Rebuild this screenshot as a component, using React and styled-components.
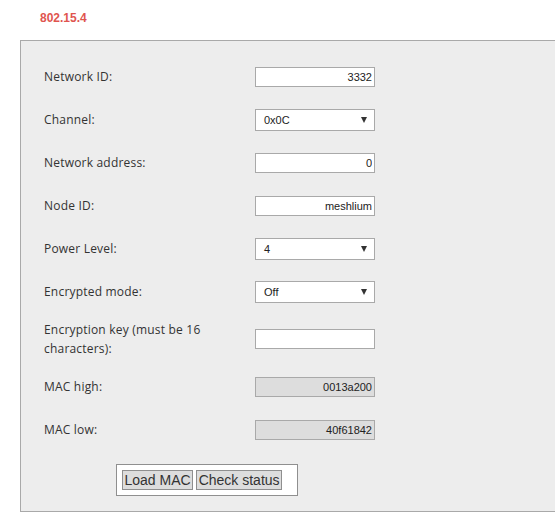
import React from "react";
import styled, { createGlobalStyle } from "styled-components";

const Global = createGlobalStyle`
  html, body { margin: 0; padding: 0; background: #fff; overflow: hidden; }
  body { width: 555px; height: 532px; }
  * { box-sizing: border-box; }
`;

const Page = styled.div`
  padding: 11px 0 0 20px;
  width: 555px;
  overflow: hidden;
`;

const Title = styled.h2`
  margin: 0 0 15px 20px;
  font-family: "Liberation Sans", Arial, sans-serif;
  font-weight: bold;
  font-size: 12px;
  line-height: 14px;
  color: #e0554f;
`;

const Panel = styled.div`
  width: 560px;
  background: #ededed;
  border: 1px solid #a9a9a9;
  padding: 14px 0 15px 23px;
`;

const Row = styled.div`
  display: flex;
  align-items: center;
  min-height: 43px;
  padding: 7px 0;
`;

const Label = styled.div`
  width: 211px;
  padding-right: 48px;
  font-family: "Open Sans", sans-serif;
  font-size: 12px;
  letter-spacing: 0.2px;
  line-height: 19px;
  color: #333;
`;

const TextInput = styled.input`
  width: 120px;
  height: 20px;
  margin: 0;
  padding: 0 2px;
  border: 1px solid #a9a9a9;
  background: ${(p) => (p.readOnly ? "#dddddd" : "#fff")};
  font-family: "Liberation Sans", Arial, sans-serif;
  font-size: 11px;
  color: #222;
  text-align: right;
  outline: none;
`;

const SelectBox = styled.div`
  width: 120px;
  height: 22px;
  border: 1px solid #a9a9a9;
  background: #fff;
  display: flex;
  align-items: center;
  justify-content: space-between;
  padding: 0 7px 0 8px;
  font-family: "Liberation Sans", Arial, sans-serif;
  font-size: 11px;
  color: #222;
`;

const Arrow = styled.span`
  width: 0;
  height: 0;
  border-left: 3.5px solid transparent;
  border-right: 3.5px solid transparent;
  border-top: 6px solid #333;
`;

const ButtonBox = styled.div`
  display: flex;
  gap: 3px;
  width: 182px;
  margin: 13px 0 0 72px;
  padding: 5px;
  background: #fff;
  border: 1px solid #8f8f8f;
`;

const Button = styled.button`
  margin: 0;
  padding: 0 1.5px;
  height: 20px;
  border: 1px solid #8f8f8f;
  background: #dddddd;
  font-family: "Liberation Sans", Arial, sans-serif;
  font-size: 14px;
  line-height: 18px;
  color: #333;
  white-space: nowrap;
`;

const Select = ({ value }) => (
  <SelectBox>
    <span>{value}</span>
    <Arrow />
  </SelectBox>
);

const fields = [
  { label: "Network ID:", type: "input", value: "3332" },
  { label: "Channel:", type: "select", value: "0x0C" },
  { label: "Network address:", type: "input", value: "0" },
  { label: "Node ID:", type: "input", value: "meshlium" },
  { label: "Power Level:", type: "select", value: "4" },
  { label: "Encrypted mode:", type: "select", value: "Off" },
  { label: "Encryption key (must be 16 characters):", type: "input", value: "" },
  { label: "MAC high:", type: "input", value: "0013a200", readOnly: true },
  { label: "MAC low:", type: "input", value: "40f61842", readOnly: true },
];

export default function App() {
  return (
    <Page>
      <Global />
      <Title>802.15.4</Title>
      <Panel>
        {fields.map((f) => (
          <Row key={f.label}>
            <Label>{f.label}</Label>
            {f.type === "select" ? (
              <Select value={f.value} />
            ) : (
              <TextInput defaultValue={f.value} readOnly={f.readOnly} />
            )}
          </Row>
        ))}
        <ButtonBox>
          <Button>Load MAC</Button>
          <Button>Check status</Button>
        </ButtonBox>
      </Panel>
    </Page>
  );
}
